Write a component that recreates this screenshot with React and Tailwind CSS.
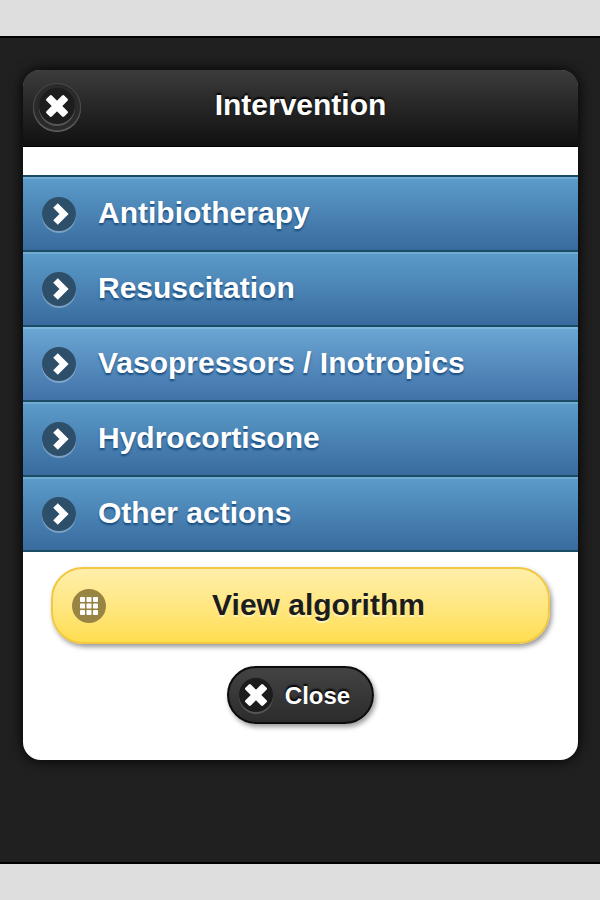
import clsx from 'clsx'

const sections = [
  { id: 'antibiotherapy', label: 'Antibiotherapy' },
  { id: 'resuscitation', label: 'Resuscitation' },
  { id: 'vasopressors', label: 'Vasopressors / Inotropics', hover: true },
  { id: 'hydrocortisone', label: 'Hydrocortisone' },
  { id: 'other', label: 'Other actions' },
]

const CrossIcon = ({ className }) => (
  <svg viewBox="0 0 24 24" className={className} fill="#fff" aria-hidden="true">
    <g transform="rotate(45 12 12)">
      <rect x="-0.5" y="8.2" width="25" height="7.6" rx="1.4" />
      <rect x="8.2" y="-0.5" width="7.6" height="25" rx="1.4" />
    </g>
  </svg>
)

const ArrowIcon = ({ className }) => (
  <svg viewBox="0 0 34 34" className={className} aria-hidden="true">
    <path d="M13.5 8.5 22 17 13.5 25.5" fill="none" stroke="#fff" strokeWidth="6.5" />
  </svg>
)

const GridIcon = ({ className }) => (
  <svg viewBox="0 0 34 34" className={className} fill="#fff" aria-hidden="true">
    {[8, 14.5, 21].map((y) =>
      [8, 14.5, 21].map((x) => <rect key={`${x}-${y}`} x={x} y={y} width="5" height="5" rx="0.8" />)
    )}
  </svg>
)

const SectionRow = ({ label, hover }) => (
  <li className="border-t-2 border-[#1a4c66]">
    <button
      type="button"
      className={clsx(
        'flex w-full items-center gap-[22px] border-t-2 bg-linear-to-b px-[19px] h-[73px] pb-[2px] text-left text-[30px] leading-[36px] font-bold text-white [text-shadow:0_2px_2px_#194b7e]',
        hover
          ? 'border-[#7fb6de] from-[#6aa6d3] to-[#4272a8]'
          : 'border-[#72acd2] from-[#5b9bc9] to-[#396b9e]'
      )}
    >
      <span className="size-[34px] shrink-0 rounded-full bg-[#2e4f6a] shadow-[0_2px_0_rgba(255,255,255,0.3)]">
        <ArrowIcon className="size-[34px]" />
      </span>
      <span className="pb-[2px]">{label}</span>
    </button>
  </li>
)

const InterventionDialog = () => (
  <section
    role="dialog"
    aria-labelledby="dialog-title"
    className="mt-8 mr-[22px] ml-[23px] rounded-[18px] bg-white shadow-[0_0_14px_#000]"
  >
    <header className="grid h-[77px] grid-cols-[60px_1fr_60px] items-center rounded-t-[16px] border-b border-black bg-linear-to-b from-[#3c3c3c] to-[#101110] px-[10px] pb-[3px] text-white">
      <button
        type="button"
        aria-label="Close dialog"
        className="flex size-12 items-center justify-center rounded-full border border-[#4a4a4a] bg-[#292a29] pb-[2px] shadow-[0_1px_0_#666]"
      >
        <span className="flex size-[36px] items-center justify-center rounded-full bg-[#1c1d1c] shadow-[0_2px_0_#565656]">
          <CrossIcon className="size-[24px]" />
        </span>
      </button>
      <h1
        id="dialog-title"
        className="pb-1 text-center text-[30px] leading-[36px] font-bold [text-shadow:0_-2px_2px_#000]"
      >
        Intervention
      </h1>
    </header>

    <ul className="mt-7 border-b-2 border-[#1a4c66]">
      {sections.map((s) => (
        <SectionRow key={s.id} label={s.label} hover={s.hover} />
      ))}
    </ul>

    <div className="flex flex-col items-center gap-[22px] px-7 pt-[15px] pb-9">
      <button
        type="button"
        className="grid h-[77px] w-full grid-cols-[70px_1fr_34px] items-center rounded-[32px] border-2 border-[#f2c741] bg-linear-to-b from-[#ffefaa] to-[#ffde4d] px-[19px] text-[#1c1c1c] shadow-[2px_3px_5px_rgba(0,0,0,0.4)]"
      >
        <span className="size-[34px] rounded-full bg-[#998543]">
          <GridIcon className="size-[34px]" />
        </span>
        <span className="pb-[2px] text-[30px] leading-[36px] font-bold [text-shadow:0_2px_0_#fff3b8]">
          View algorithm
        </span>
      </button>
      <button
        type="button"
        className="flex h-[58px] items-center gap-3 rounded-full border-2 border-[#0c0c0c] bg-linear-to-b from-[#434343] to-[#2b2c2b] pr-[22px] pl-[10px] text-white shadow-[2px_3px_5px_rgba(0,0,0,0.4)]"
      >
        <span className="flex size-[34px] items-center justify-center rounded-full bg-[#1c1c1c] shadow-[0_2px_0_#555]">
          <CrossIcon className="size-[24px]" />
        </span>
        <span className="pt-[2px] text-[24px] leading-[30px] font-bold [text-shadow:0_-2px_2px_#000]">
          Close
        </span>
      </button>
    </div>
  </section>
)

const App = () => (
  <div className="flex min-h-screen flex-col bg-[#dedede] py-9 font-['Liberation_Sans',Arial,sans-serif]">
    <main className="flex-1 border-y-2 border-black bg-[#202020] pb-16">
      <InterventionDialog />
    </main>
  </div>
)

export default App
